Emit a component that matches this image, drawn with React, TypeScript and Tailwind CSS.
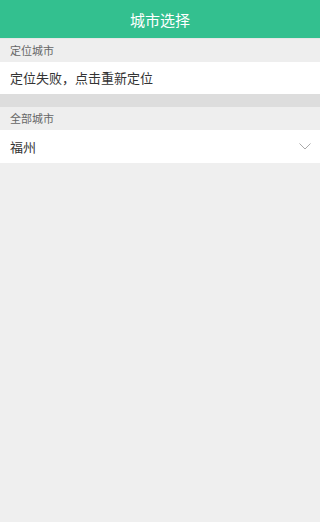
import React from "react";

export default function App() {
  return (
    <div
      className="min-h-[522px] bg-[#efefef]"
      style={{ fontFamily: '"Noto Sans CJK SC", "Liberation Sans", sans-serif' }}
    >
      {/* Header */}
      <header className="h-[39px] bg-[#33c08f] flex items-center justify-center border-b border-[#e6e6e6]">
        <h1 className="text-[15px] text-white leading-none">城市选择</h1>
      </header>

      {/* Located city */}
      <div className="h-[23px] flex items-center px-[10px] text-[11px] text-[#666] bg-[#eeeeee]">
        定位城市
      </div>
      <div className="h-[32px] flex items-center px-[10px] text-[13px] text-[#333] bg-white">
        定位失败，点击重新定位
      </div>

      <div className="h-[13px] bg-[#dddddd]" />

      {/* All cities */}
      <div className="h-[23px] flex items-center px-[10px] text-[11px] text-[#666] bg-[#eeeeee]">
        全部城市
      </div>
      <div className="h-[33px] flex items-center justify-between pl-[10px] pr-[9px] text-[13px] text-[#333] bg-white">
        <span>福州</span>
        <svg width="12" height="7" viewBox="0 0 12 7" fill="none">
          <path d="M0.5 0.5L6 6L11.5 0.5" stroke="#aaaaaa" strokeWidth="1" />
        </svg>
      </div>
    </div>
  );
}
